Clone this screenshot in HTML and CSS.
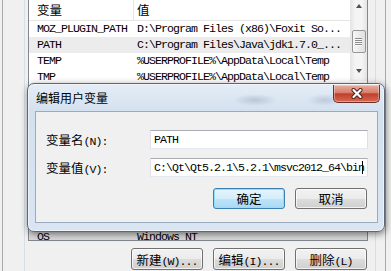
FILE: index.html
```html
<!DOCTYPE html>
<html>
<head>
    <title>编辑用户变量</title>
    <link rel="stylesheet" href="styles.css">
</head>
<body>
    <div class="env">
        <div class="group">
            <div class="list user">
                <div class="cols">
                    <div class="row head"><span class="c1"><span class="zh">变量</span></span><span class="c2"><span class="zh">值</span></span></div>
                    <div class="row"><span class="c1">MOZ_PLUGIN_PATH</span><span class="c2">D:\Program Files (x86)\Foxit So...</span></div>
                    <div class="row sel"><span class="c1">PATH</span><span class="c2">C:\Program Files\Java\jdk1.7.0_...</span></div>
                    <div class="row"><span class="c1">TEMP</span><span class="c2">%USERPROFILE%\AppData\Local\Temp</span></div>
                    <div class="row"><span class="c1">TMP</span><span class="c2">%USERPROFILE%\AppData\Local\Temp</span></div>
                </div>
                <div class="vscroll">
                    <div class="arr up"></div>
                    <div class="thumb"></div>
                    <div class="arr down"></div>
                </div>
            </div>
            <div class="list sys">
                <div class="cols">
                    <div class="row inactive"><span class="c1">OS</span><span class="c2">Windows_NT</span></div>
                </div>
            </div>
            <div class="btns">
                <button class="btn"><span class="zh">新建</span>(W)...</button>
                <button class="btn"><span class="zh">编辑</span>(I)...</button>
                <button class="btn"><span class="zh">删除</span>(L)</button>
            </div>
        </div>
    </div>

    <div class="dialog">
        <div class="titlebar">
            <span class="title">编辑用户变量</span>
            <div class="close">
                <svg width="14" height="11" viewBox="0 0 14 11">
                    <path d="M3.5 2 L10.5 9 M10.5 2 L3.5 9" stroke="#4a1f1a" stroke-width="4" stroke-linecap="round"/>
                    <path d="M3.5 2 L10.5 9 M10.5 2 L3.5 9" stroke="#fff" stroke-width="2.2" stroke-linecap="round"/>
                </svg>
            </div>
        </div>
        <div class="body">
            <div class="fields">
                <label><span class="zh">变量名</span>(N):</label>
                <div class="input">PATH</div>
                <label><span class="zh">变量值</span>(V):</label>
                <div class="input">C:\Qt\Qt5.2.1\5.2.1\msvc2012_64\bin<span class="caret"></span></div>
            </div>
            <div class="actions">
                <button class="btn default"><span class="zh">确定</span></button>
                <button class="btn"><span class="zh">取消</span></button>
            </div>
        </div>
    </div>
</body>
</html>
```

FILE: styles.css
```css
body {
    margin: 0;
    width: 391px;
    height: 271px;
    overflow: hidden;
    position: relative;
    background: #f0f0f0;
    color: #000;
    font-family: "Liberation Mono", "Noto Sans CJK SC", monospace;
    font-size: 11.6px;
    letter-spacing: -0.96px;
}
.zh {
    font-family: "Noto Sans CJK SC", sans-serif;
    font-size: 12.5px;
    letter-spacing: 0;
}
.env {
    box-sizing: border-box;
    width: 384px;
    height: 271px;
    margin-left: 2px;
    padding-right: 9px;
    border-left: 1px solid #a9a9a9;
    border-right: 1px solid #a9a9a9;
}
.group {
    box-sizing: border-box;
    width: 352px;
    height: 271px;
    margin-left: 21px;
    padding: 0 7px 0 3px;
    border-left: 1px solid #d5dfe5;
    border-right: 1px solid #d5dfe5;
    display: flex;
    flex-direction: column;
}
.list {
    background: #fff;
    border: 1px solid #828790;
    border-top: 0;
    display: flex;
    overflow: hidden;
}
.list.user {
    height: 120px;
}
.list.sys {
    margin-top: auto;
    height: 50px;
    border-top: 1px solid #828790;
    align-items: flex-end;
}
.cols {
    flex: 1;
    min-width: 0;
}
.row {
    display: flex;
    height: 16px;
    line-height: 16px;
    white-space: nowrap;
}
.c1 {
    box-sizing: border-box;
    width: 104px;
    padding-left: 8px;
    overflow: hidden;
}
.c2 {
    flex: 1;
    padding-left: 4px;
    overflow: hidden;
}
.head {
    box-sizing: border-box;
    height: 21px;
    line-height: 20px;
    border-bottom: 1px solid #e5e5e5;
}
.head .c2 {
    border-left: 1px solid #e5e5e5;
    padding-left: 3px;
}
.sel {
    background: #ececec;
}
.inactive {
    background: #d9d9d9;
    margin-bottom: -5px;
}
.vscroll {
    flex: none;
    width: 17px;
    height: 81px;
    background: linear-gradient(to right, #e4e4e4, #f4f4f4 30%, #f4f4f4 70%, #e4e4e4);
    display: flex;
    flex-direction: column;
    align-items: center;
}
.arr {
    width: 0;
    height: 0;
    border-left: 3.5px solid transparent;
    border-right: 3.5px solid transparent;
}
.arr.up {
    margin-top: 4px;
    border-bottom: 4px solid #505050;
}
.arr.down {
    margin-top: 16px;
    border-top: 4px solid #505050;
}
.thumb {
    box-sizing: border-box;
    width: 14px;
    height: 23px;
    margin-top: 22px;
    border: 1px solid #979797;
    border-radius: 2px;
    background: linear-gradient(to right, #f6f6f6, #e0e0e0);
    display: flex;
    align-items: center;
    justify-content: center;
}
.thumb::before {
    content: "";
    width: 7px;
    height: 8px;
    background: repeating-linear-gradient(#8a8a8a 0 1px, #f8f8f8 1px 2px);
}
.btns {
    display: flex;
    justify-content: flex-end;
    gap: 10px;
    margin: 7px 1px 1px 0;
}
.btn {
    box-sizing: border-box;
    width: 72px;
    height: 21px;
    padding: 0;
    border: 1px solid #707070;
    border-radius: 3px;
    background: linear-gradient(#f2f2f2, #ebebeb 50%, #dddddd 50%, #cfcfcf);
    box-shadow: inset 0 0 0 1px rgba(255,255,255,0.7);
    color: #000;
    font: inherit;
    letter-spacing: inherit;
    white-space: nowrap;
}
.btns .btn {
    height: 22px;
}
.btn.default {
    border-color: #3c7fb1;
    background: linear-gradient(#e5f4fc, #d4eefb 50%, #bde5f9 50%, #a9d9f3);
    box-shadow: inset 0 0 0 1px #8fe0fb;
}
.dialog {
    position: absolute;
    left: 27px;
    top: 83px;
    box-sizing: border-box;
    width: 358px;
    height: 149px;
    padding: 0 6px 8px 7px;
    border: 1px solid #5e6875;
    border-radius: 7px;
    background: linear-gradient(#e4edf7, #d3e0ee 28px, #d9e5f2);
    box-shadow: 1px 2px 7px rgba(0,0,0,0.5), inset 0 0 0 1px rgba(255,255,255,0.55);
    display: flex;
    flex-direction: column;
}
.titlebar {
    height: 27px;
    padding-left: 1px;
    display: flex;
    align-items: center;
    background:
        radial-gradient(ellipse 22px 6px at 220px 16px, rgba(120,140,165,0.35), transparent),
        radial-gradient(ellipse 18px 6px at 290px 16px, rgba(120,140,165,0.3), transparent);
}
.title {
    font-family: "Noto Sans CJK SC", sans-serif;
    font-size: 12px;
    letter-spacing: 0;
}
.close {
    position: absolute;
    top: 1px;
    right: 4px;
    box-sizing: border-box;
    width: 47px;
    height: 18px;
    border: 1px solid #6b2f28;
    border-top: 0;
    border-radius: 0 0 5px 5px;
    background: linear-gradient(#e9ad9e, #d6806b 45%, #c23f2c 52%, #d56a52);
    box-shadow: inset 0 0 0 1px rgba(255,255,255,0.35);
    display: flex;
    align-items: center;
    justify-content: center;
}
.body {
    flex: 1;
    background: #f0f0f0;
    border: 1px solid #9aabbe;
    padding: 18px 9px 0 10px;
}
.fields {
    display: grid;
    grid-template-columns: 104px 218px;
    row-gap: 9px;
    align-items: center;
}
.input {
    box-sizing: border-box;
    height: 19px;
    padding-left: 3px;
    line-height: 17px;
    background: #fff;
    border: 1px solid;
    border-color: #abadb3 #dbdfe6 #e3e9ef #e2e3ea;
    white-space: nowrap;
    overflow: hidden;
}
.caret {
    display: inline-block;
    width: 1px;
    height: 13px;
    margin-left: -2px;
    background: #000;
    vertical-align: -3px;
}
.actions {
    display: flex;
    justify-content: flex-end;
    gap: 10px;
    margin-top: 11px;
    padding-right: 1px;
}
```
